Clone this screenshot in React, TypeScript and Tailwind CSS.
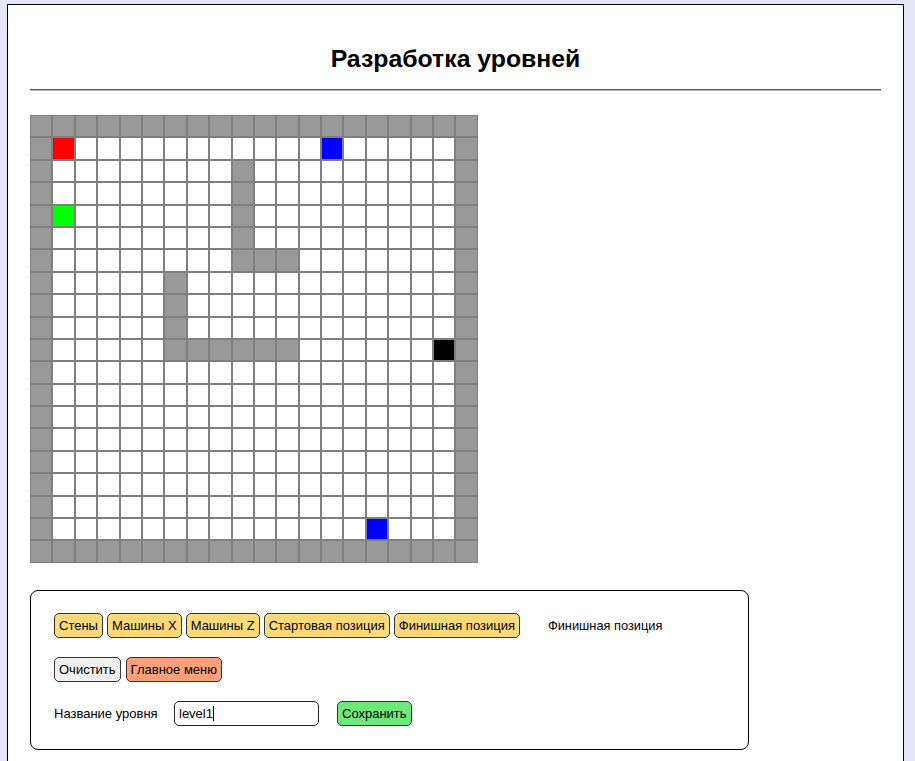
import React from "react";

const N = 20;
const SIZE = 22.4;

function cellColor(r: number, c: number): string {
  if (r === 0 || r === N - 1 || c === 0 || c === N - 1) return "#999999";
  if (r === 1 && c === 1) return "#ff0000";
  if (r === 1 && c === 13) return "#0000ff";
  if (r === 4 && c === 1) return "#00ff00";
  if (r === 10 && c === 18) return "#000000";
  if (r === 18 && c === 15) return "#0000ff";
  if (c === 9 && r >= 2 && r <= 6) return "#999999";
  if (r === 6 && (c === 10 || c === 11)) return "#999999";
  if (c === 6 && r >= 7 && r <= 10) return "#999999";
  if (r === 10 && c >= 6 && c <= 11) return "#999999";
  return "#ffffff";
}

function Btn({ children, cls }: { children: React.ReactNode; cls: string }) {
  return (
    <button
      className={`h-[25px] px-[4px] border border-[#333] rounded-[5px] text-[13px] text-black leading-none ${cls}`}
      style={{ fontFamily: '"Liberation Sans", Arial, sans-serif' }}
    >
      {children}
    </button>
  );
}

export default function App() {
  const cells = [];
  for (let r = 0; r < N; r++) {
    for (let c = 0; c < N; c++) {
      cells.push(
        <div
          key={`${r}-${c}`}
          className="border border-[#7f7f7f] box-border"
          style={{ background: cellColor(r, c) }}
        />
      );
    }
  }
  return (
    <div
      className="min-h-[761px] bg-[#e6e6fa] pt-[4px] pl-[7px] overflow-hidden"
      style={{ fontFamily: '"Liberation Sans", Arial, sans-serif' }}
    >
      <div className="w-[897px] min-h-[800px] bg-white border border-black px-[22px] pt-[40px] box-border">
        <h1 className="h-[28px] leading-[28px] text-[24.8px] font-bold text-center text-black">
          Разработка уровней
        </h1>
        <div className="mt-[16px] h-[2px] border-t border-[#555] border-b border-b-[#bbb]" />
        <div
          className="mt-[24px] grid w-[448px] h-[448px]"
          style={{
            gridTemplateColumns: `repeat(${N}, ${SIZE}px)`,
            gridTemplateRows: `repeat(${N}, ${SIZE}px)`,
          }}
        >
          {cells}
        </div>
        <div className="mt-[27px] w-[719px] h-[160px] border border-black rounded-[8px] px-[23px] pt-[22px] box-border">
          <div className="flex items-center gap-[4px] h-[25px]">
            <Btn cls="bg-[#ffd97a]">Стены</Btn>
            <Btn cls="bg-[#ffd97a]">Машины X</Btn>
            <Btn cls="bg-[#ffd97a]">Машины Z</Btn>
            <Btn cls="bg-[#ffd97a]">Стартовая позиция</Btn>
            <Btn cls="bg-[#ffd97a]">Финишная позиция</Btn>
            <span className="ml-[24px] text-[12.8px] text-black">Финишная позиция</span>
          </div>
          <div className="flex items-center gap-[5px] h-[25px] mt-[19px]">
            <Btn cls="bg-[#f0f0f0]">Очистить</Btn>
            <Btn cls="bg-[#ffa07a]">Главное меню</Btn>
          </div>
          <div className="flex items-center h-[25px] mt-[19px]">
            <span className="text-[13px] text-black w-[120px]">Название уровня</span>
            <div className="w-[145px] h-[25px] border border-[#222] rounded-[5px] flex items-center px-[4px] text-[13px] text-black box-border">
              <span>level1</span>
              <span className="inline-block w-[1px] h-[15px] bg-black" />
            </div>
            <div className="ml-[18px]">
              <Btn cls="bg-[#6fe87b]">Сохранить</Btn>
            </div>
          </div>
        </div>
      </div>
    </div>
  );
}
